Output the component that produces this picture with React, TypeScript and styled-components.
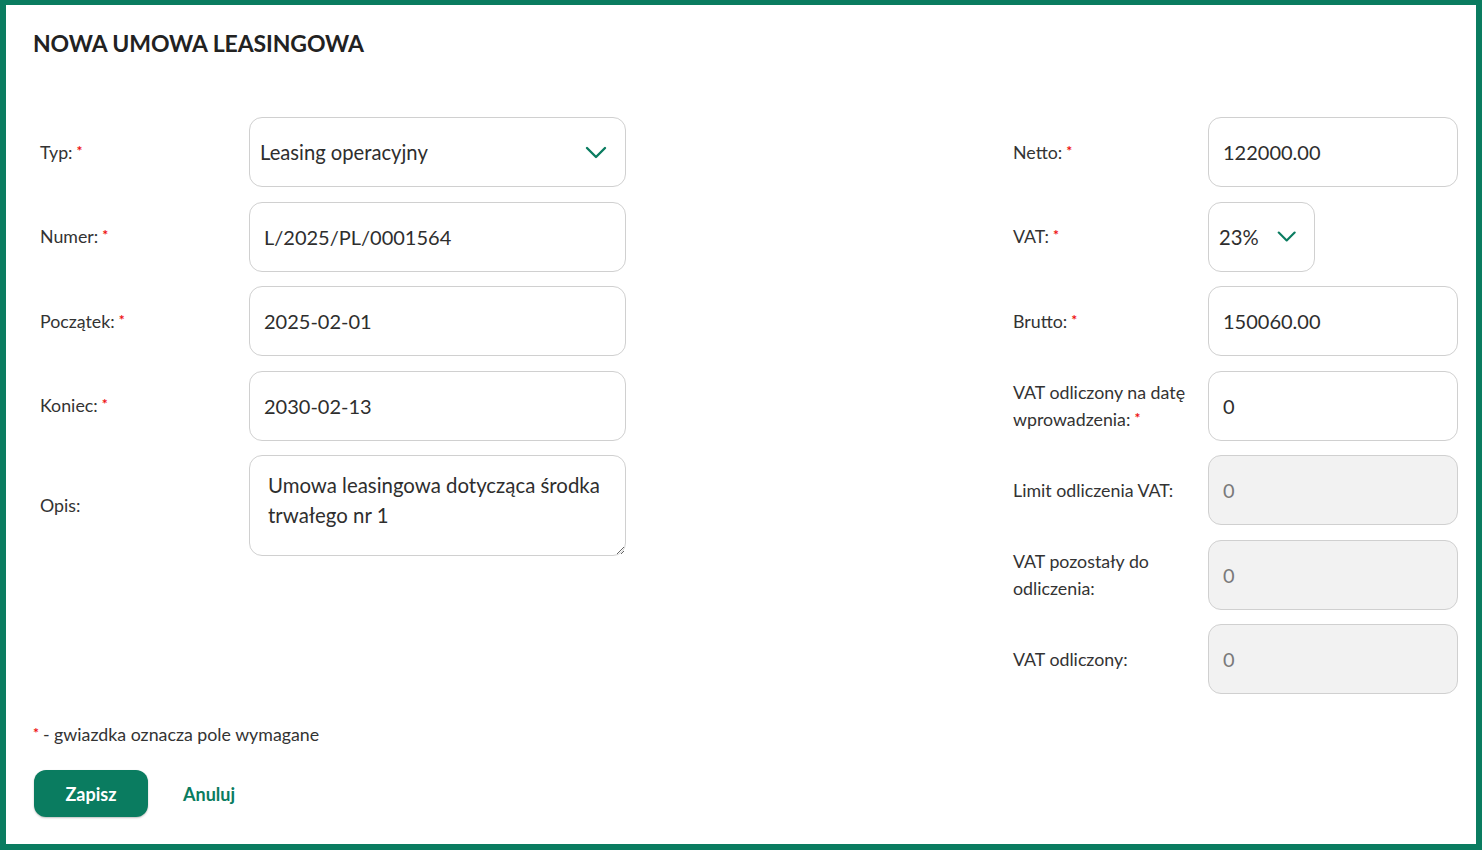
import React from "react";
import styled, { createGlobalStyle } from "styled-components";

const GREEN = "#0a7c60";

const Global = createGlobalStyle`
  html, body { margin: 0; padding: 0; background: #fff; }
  body { font-family: Lato, "Open Sans", Arial, sans-serif; color: #2e2e2e; }
  * { box-sizing: border-box; }
`;

const Frame = styled.div`
  width: 1482px;
  height: 850px;
  border: 6px solid ${GREEN};
  border-top-width: 5px;
  background: #fff;
  display: flex;
  flex-direction: column;
  padding: 27px 18px 0 27px;
`;

const Title = styled.h1`
  margin: 0;
  font-size: 23px;
  font-weight: 700;
  color: #222;
  letter-spacing: -0.1px;
  line-height: 22px;
`;

const Columns = styled.div`
  display: flex;
  justify-content: space-between;
  margin-top: 63px;
  padding-left: 7px;
`;

const FieldGrid = styled.div<{ $label: number; $field: number }>`
  display: grid;
  grid-template-columns: ${(p) => p.$label}px ${(p) => p.$field}px;
  row-gap: 14.5px;
  align-items: center;
  align-content: start;
`;

const Label = styled.label`
  font-size: 17.8px;
  line-height: 27px;
  color: #333;
  padding-right: 10px;
`;

const Req = styled.span`
  color: #e11;
  font-size: 14px;
  font-weight: 700;
  line-height: 0;
  position: relative;
  top: -3px;
  margin-left: 4px;
`;

const Input = styled.input<{ $pad?: number }>`
  height: 70px;
  width: 100%;
  border: 1.5px solid #d0d0d0;
  border-radius: 13px;
  padding: 0 0 0 ${(p) => p.$pad ?? 14}px;
  font-family: Lato, Arial, sans-serif;
  font-size: 20px;
  color: #2e2e2e;
  background: #fff;
  outline: none;
  &:disabled {
    background: #f2f2f2;
    color: #7a7a7a;
  }
`;

const Area = styled.textarea`
  height: 101px;
  width: 100%;
  border: 1.5px solid #d0d0d0;
  border-radius: 13px;
  padding: 14px 18px;
  font-family: Lato, Arial, sans-serif;
  font-size: 20.4px;
  line-height: 30px;
  color: #2e2e2e;
  outline: none;
  resize: vertical;
`;

const Select = styled.div<{ $width?: number; $pad: number; $gap?: number }>`
  height: 70px;
  width: ${(p) => (p.$width ? `${p.$width}px` : "100%")};
  border: 1.5px solid #d0d0d0;
  border-radius: 13px;
  padding: 0 18px 0 ${(p) => p.$pad}px;
  display: flex;
  align-items: center;
  justify-content: ${(p) => (p.$gap ? "flex-start" : "space-between")};
  gap: ${(p) => p.$gap ?? 0}px;
  font-size: 20.2px;
  color: #2e2e2e;
`;

const Footer = styled.div`
  margin-top: auto;
  padding-bottom: 27px;
  display: flex;
  flex-direction: column;
  gap: 22px;
`;

const Note = styled.div`
  font-size: 17.8px;
  color: #333;
  line-height: 24px;
`;

const NoteStar = styled.span`
  color: #e11;
  font-size: 14px;
  font-weight: 700;
  position: relative;
  top: -3px;
  margin-right: 4px;
`;

const Actions = styled.div`
  display: flex;
  align-items: center;
  gap: 35px;
  padding-left: 1px;
`;

const Primary = styled.button`
  width: 114px;
  height: 47px;
  border: none;
  border-radius: 12px;
  background: ${GREEN};
  color: #fff;
  font-family: Lato, Arial, sans-serif;
  font-weight: 700;
  font-size: 18px;
  box-shadow: 0 1px 2px rgba(0, 0, 0, 0.25);
`;

const LinkBtn = styled.button`
  border: none;
  background: none;
  padding: 0;
  color: ${GREEN};
  font-family: Lato, Arial, sans-serif;
  font-weight: 700;
  font-size: 18px;
`;

const Chevron = () => (
  <svg width="22" height="13" viewBox="0 0 22 13" fill="none">
    <path d="M2 2l9 9 9-9" stroke={GREEN} strokeWidth="2.4" strokeLinecap="round" strokeLinejoin="round" />
  </svg>
);

const R = ({ children }: { children: React.ReactNode }) => (
  <Label>
    {children}
    <Req>*</Req>
  </Label>
);

export default function App() {
  return (
    <>
      <Global />
      <Frame>
        <Title>NOWA UMOWA LEASINGOWA</Title>
        <Columns>
          <FieldGrid $label={209} $field={377}>
            <R>Typ:</R>
            <Select $pad={10}>
              <span>Leasing operacyjny</span>
              <Chevron />
            </Select>
            <R>Numer:</R>
            <Input defaultValue="L/2025/PL/0001564" />
            <R>Początek:</R>
            <Input defaultValue="2025-02-01" />
            <R>Koniec:</R>
            <Input defaultValue="2030-02-13" />
            <Label>Opis:</Label>
            <Area defaultValue={"Umowa leasingowa dotycząca środka trwałego nr 1"} />
          </FieldGrid>
          <FieldGrid $label={195} $field={250}>
            <R>Netto:</R>
            <Input defaultValue="122000.00" />
            <R>VAT:</R>
            <Select $pad={10} $width={107} $gap={18}>
              <span>23%</span>
              <Chevron />
            </Select>
            <R>Brutto:</R>
            <Input defaultValue="150060.00" />
            <R>VAT odliczony na datę wprowadzenia:</R>
            <Input defaultValue="0" />
            <Label>Limit odliczenia VAT:</Label>
            <Input defaultValue="0" disabled />
            <Label>VAT pozostały do odliczenia:</Label>
            <Input defaultValue="0" disabled />
            <Label>VAT odliczony:</Label>
            <Input defaultValue="0" disabled />
          </FieldGrid>
        </Columns>
        <Footer>
          <Note>
            <NoteStar>*</NoteStar>- gwiazdka oznacza pole wymagane
          </Note>
          <Actions>
            <Primary>Zapisz</Primary>
            <LinkBtn>Anuluj</LinkBtn>
          </Actions>
        </Footer>
      </Frame>
    </>
  );
}
